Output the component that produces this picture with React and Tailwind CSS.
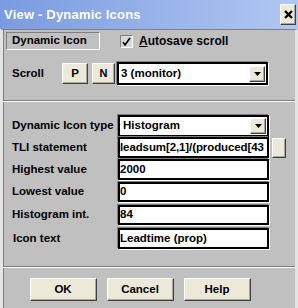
const font = { fontFamily: '"Liberation Sans", Arial, sans-serif' };

const Bevel = ({ className = '', children }) => (
    <div className={`flex items-center justify-center bg-[#ece9d8] border border-t-white border-l-white border-r-[#404040] border-b-[#404040] shadow-[inset_-1px_-1px_0_#aca899] ${className}`}>
        {children}
    </div>
);

const DropButton = () => (
    <Bevel className="w-[16px] h-[16px]">
        <svg width="7" height="4" viewBox="0 0 7 4"><path d="M0 0h7L3.5 4z" fill="#000" /></svg>
    </Bevel>
);

const Field = ({ children, className = '' }) => (
    <div className={`flex items-center h-full w-[151px] bg-white border-2 border-black shadow-[-1px_-1px_0_#808080,1px_1px_0_#ffffff] ${className}`}>
        {children}
    </div>
);

const Row = ({ label, h, mt, indent = 'pl-[9px]', children }) => (
    <div className={`flex items-center ${mt}`} style={{ height: h }}>
        <div className={`w-[115px] shrink-0 whitespace-nowrap ${indent}`}>{label}</div>
        {children}
    </div>
);

export default function App() {
    return (
        <div className="w-[298px] h-[308px] flex flex-col bg-[#c0c0c0] text-[11.5px] font-bold text-black" style={font}>
            <div className="h-[29px] flex items-center justify-between pl-[4px] pr-[2px] bg-gradient-to-r from-[#7a9be0] to-[#b2c8f2]">
                <span className="text-white text-[13px] font-bold tracking-[0.2px]">View - Dynamic Icons</span>
                <Bevel className="w-[16px] h-[21px] text-[15px] leading-none">
                    <svg width="9" height="9" viewBox="0 0 9 9"><path d="M1 1l7 7M8 1L1 8" stroke="#000" strokeWidth="2.4" /></svg>
                </Bevel>
            </div>
            <div className="flex-1 flex flex-col border-t border-t-[#808080] border-l-[3px] border-l-[#e4e4e4] border-r-[3px] border-r-[#e4e4e4] shadow-[inset_1px_0_0_#808080]">
                <div className="h-[70px] flex flex-col">
                    <div className="flex items-center mt-[2px] h-[18px]">
                        <div className="ml-[3px] w-[94px] h-[18px] flex items-center pl-[5px] border border-t-[#808080] border-l-[#808080] border-r-white border-b-white">
                            Dynamic Icon
                        </div>
                        <div className="ml-[20px] w-[13px] h-[13px] bg-[#d8d8d8] border border-t-[#808080] border-l-[#808080] border-r-white border-b-white flex items-center justify-center">
                            <svg width="9" height="9" viewBox="0 0 9 9"><path d="M1 5l2 3L8 1" stroke="#000" strokeWidth="1.6" fill="none" /></svg>
                        </div>
                        <span className="ml-[6px] text-[12px]"><span className="underline">A</span>utosave scroll</span>
                    </div>
                    <div className="flex items-center mt-[12px] h-[23px]">
                        <span className="w-[59px] pl-[9px]">Scroll</span>
                        <Bevel className="w-[26px] h-[21px]">P</Bevel>
                        <Bevel className="ml-[4px] w-[23px] h-[21px] text-[11px]">N</Bevel>
                        <Field className="ml-[2px] justify-between pr-[1px]">
                            <span className="pl-[2px] font-bold">3 (monitor)</span>
                            <DropButton />
                        </Field>
                    </div>
                </div>
                <div className="border-t border-t-[#808080] border-b border-b-white" />
                <div className="flex flex-col">
                    <Row label="Dynamic Icon type" h={22} mt="mt-[13px]">
                        <Field className="justify-between pr-[1px]">
                            <span className="pl-[3px]">Histogram</span>
                            <DropButton />
                        </Field>
                    </Row>
                    <Row label="TLI statement" h={21} mt="mt-0">
                        <Field className="overflow-hidden whitespace-nowrap">
                            <span className="tracking-[-0.1px]">leadsum[2,1]/(produced[43</span>
                        </Field>
                        <Bevel className="ml-[3px] w-[14px] h-[20px]" />
                    </Row>
                    <Row label="Highest value" h={21} mt="mt-[1px]">
                        <Field><span>2000</span></Field>
                    </Row>
                    <Row label="Lowest value" h={20} mt="mt-[2px]">
                        <Field><span>0</span></Field>
                    </Row>
                    <Row label="Histogram int." h={20} mt="mt-[3px]">
                        <Field><span>84</span></Field>
                    </Row>
                    <Row label="Icon text" h={21} mt="mt-[3px]" indent="pl-[10px]">
                        <Field><span>Leadtime (prop)</span></Field>
                    </Row>
                </div>
                <div className="mt-[17px] border-t border-t-[#808080] border-b border-b-white" />
                <div className="flex justify-center gap-[10px] mt-[10px] pr-[18px]">
                    <Bevel className="w-[67px] h-[23px]">OK</Bevel>
                    <Bevel className="w-[67px] h-[23px]">Cancel</Bevel>
                    <Bevel className="w-[67px] h-[23px]">Help</Bevel>
                </div>
            </div>
        </div>
    );
}
